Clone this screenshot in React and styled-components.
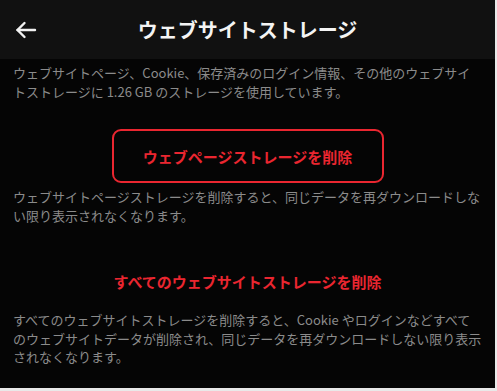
import styled, { createGlobalStyle } from "styled-components"

const GlobalStyle = createGlobalStyle`
  body {
    margin: 0;
    background: #e9e9e9;
  }
`

const Screen = styled.div`
  width: 495px;
  height: 388px;
  background: #050505;
  font-family: "Noto Sans CJK JP", "Noto Sans", "Liberation Sans", sans-serif;
  display: flex;
  flex-direction: column;
  overflow: hidden;
`

const Header = styled.header`
  height: 59px;
  background: #111111;
  display: grid;
  grid-template-columns: 1fr auto 1fr;
  align-items: center;
  padding: 0 14px;
  box-sizing: border-box;
`

const BackButton = styled.button`
  background: none;
  border: none;
  padding: 0;
  width: 26px;
  height: 26px;
  display: flex;
  align-items: center;
  color: #f2f2f2;
  cursor: pointer;
`

const Title = styled.h1`
  margin: 0;
  font-size: 20px;
  font-weight: 700;
  color: #f4f4f4;
  letter-spacing: 0;
`

const Content = styled.main`
  display: flex;
  flex-direction: column;
  padding: 0 13px;
`

const Description = styled.p`
  margin: ${(p) => p.$top || 5}px 0 0;
  font-size: 13px;
  line-height: 18.5px;
  color: #8b8b8b;
`

const DeleteButton = styled.button`
  align-self: center;
  margin-top: ${(p) => p.$top}px;
  width: 272px;
  height: ${(p) => (p.$outlined ? 54 : 50)}px;
  border: ${(p) => (p.$outlined ? "2.5px solid #ea2630" : "none")};
  border-radius: 9px;
  background: transparent;
  color: #ea2630;
  font-family: inherit;
  font-size: 15px;
  font-weight: 700;
  padding: 0;
  cursor: pointer;
  box-sizing: border-box;
`

const ArrowIcon = () => (
  <svg width="24" height="24" viewBox="0 0 24 24" fill="none" stroke="currentColor" strokeWidth="2.4" strokeLinecap="round" strokeLinejoin="round">
    <path d="M21 12H3.5" />
    <path d="M10.5 5l-7 7 7 7" />
  </svg>
)

export default function App() {
  return (
    <>
      <GlobalStyle />
      <Screen>
        <Header>
          <BackButton aria-label="戻る">
            <ArrowIcon />
          </BackButton>
          <Title>ウェブサイトストレージ</Title>
          <span />
        </Header>
        <Content>
          <Description>
            ウェブサイトページ、Cookie、保存済みのログイン情報、その他のウェブサイ<br />
            トストレージに 1.26 GB のストレージを使用しています。
          </Description>
          <DeleteButton $outlined $top={28}>ウェブページストレージを削除</DeleteButton>
          <Description>
            ウェブサイトページストレージを削除すると、同じデータを再ダウンロードしな<br />
            い限り表示されなくなります。
          </Description>
          <DeleteButton $top={31}>すべてのウェブサイトストレージを削除</DeleteButton>
          <Description>
            すべてのウェブサイトストレージを削除すると、Cookie やログインなどすべて<br />
            のウェブサイトデータが削除され、同じデータを再ダウンロードしない限り表示<br />
            されなくなります。
          </Description>
        </Content>
      </Screen>
    </>
  )
}
